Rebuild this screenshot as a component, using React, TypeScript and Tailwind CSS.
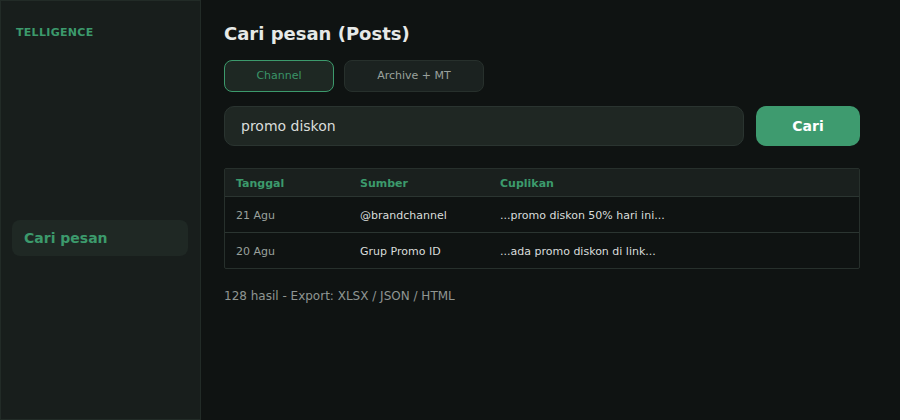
const rows = [
  { date: '21 Agu', source: '@brandchannel', snippet: '...promo diskon 50% hari ini...' },
  { date: '20 Agu', source: 'Grup Promo ID', snippet: '...ada promo diskon di link...' },
];

const App = () => {
  return (
    <div className="flex h-[420px] w-[900px] bg-[#0f1312] font-['DejaVu_Sans',sans-serif]">
      <aside className="flex w-[201px] shrink-0 flex-col border border-[#222b27] bg-[#181e1c] pl-[11px] pr-[12px]">
        <div className="mt-[25px] px-[4px] text-[11px] font-bold leading-[14px] tracking-[0.3px] text-[#3c9a6c]">
          TELLIGENCE
        </div>
        <div className="mt-[180px] flex h-[36px] items-center rounded-[8px] bg-[#1f2824] px-[12px] text-[14px] font-bold text-[#3c9a6c]">
          Cari pesan
        </div>
      </aside>

      <main className="flex-1 pl-[23px] pr-[40px] pt-[22px]">
        <h1 className="text-[18px] font-bold leading-[24px] text-[#e6e9e7]">Cari pesan (Posts)</h1>

        <div className="mt-[14px] flex gap-[10px]">
          <button className="h-[32px] w-[110px] rounded-[8px] border border-[#3c9a6c] bg-[#1e2823] text-[11px] text-[#3a9468]">
            Channel
          </button>
          <button className="h-[32px] w-[140px] rounded-[8px] border border-[#27302c] bg-[#1b2220] text-[11px] text-[#9aa19d]">
            Archive + MT
          </button>
        </div>

        <div className="mt-[14px] flex gap-[12px]">
          <div className="flex h-[40px] flex-1 items-center rounded-[10px] border border-[#2a3430] bg-[#1f2723] px-[16px] text-[14px] text-[#d9dddb]">
            promo diskon
          </div>
          <button className="h-[40px] w-[104px] rounded-[10px] bg-[#3e9b6f] text-[14px] font-bold text-white">
            Cari
          </button>
        </div>

        <div className="mt-[22px] rounded-[2px] border border-[#27302c] text-[11px]">
          <div className="flex h-[28px] items-center border-b border-[#2b3531] bg-[#1a201e] px-[11px] pt-[3px] font-bold text-[#3c9a6c]">
            <div className="w-[124px]">Tanggal</div>
            <div className="w-[140px]">Sumber</div>
            <div className="flex-1">Cuplikan</div>
          </div>
          {rows.map((row, index) => (
            <div
              key={index}
              className={`flex items-center px-[11px] pt-[3px] ${index === 0 ? 'h-[36px] border-b border-[#2b3531]' : 'h-[35px]'}`}
            >
              <div className="w-[124px] text-[#9aa19d]">{row.date}</div>
              <div className="w-[140px] text-[#d9dddb]">{row.source}</div>
              <div className="flex-1 text-[#d9dddb]">{row.snippet}</div>
            </div>
          ))}
        </div>

        <p className="mt-[18px] text-[12px] text-[#8f9692]">128 hasil - Export: XLSX / JSON / HTML</p>
      </main>
    </div>
  );
};

export default App;
